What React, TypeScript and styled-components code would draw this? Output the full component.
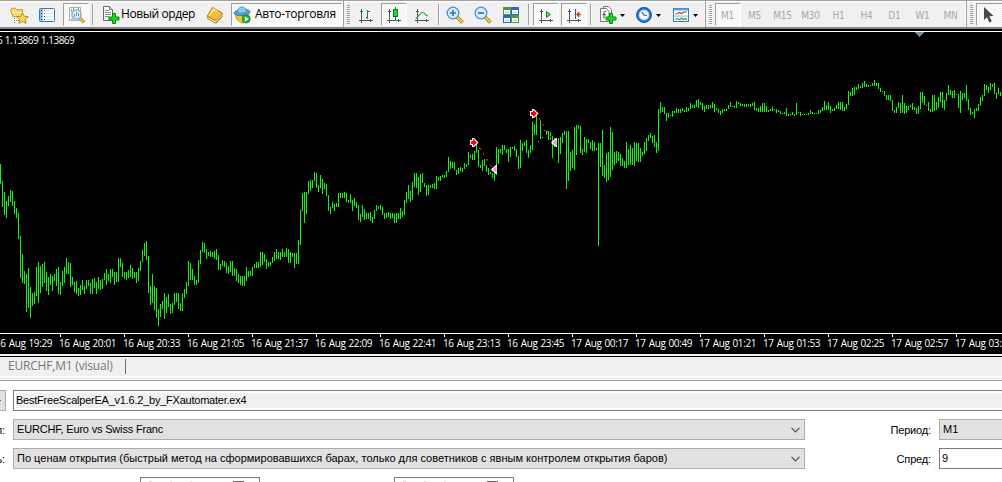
import React from 'react';
import styled, { createGlobalStyle, css } from 'styled-components';

const GlobalStyle = createGlobalStyle`
  * { box-sizing: border-box; }
  body {
    margin: 0;
    overflow: hidden;
    background: #fff;
    font-family: 'Open Sans', 'Noto Sans', sans-serif;
    font-size: 12px;
    color: #000;
  }
`;

/* High/low pixel pairs of the M1 bars, one bar every two pixels. */
const BARS = `
164,184 181,207 192,215 201,218 196,206 190,202 191,206 201,214 208,218 213,239
236,278 254,283 271,284 274,312 268,308 287,318 293,306 292,304 267,296 262,303
266,293 264,287 262,283 272,291 277,295 274,285 276,291 274,281 269,286 267,294
282,295 271,286 267,283 258,274 262,274 263,287 277,285 282,292 281,294 288,296
285,295 280,290 286,294 280,289 280,286 283,294 279,294 278,288 282,294 277,289
280,290 279,289 273,280 269,285 274,281 269,283 269,277 272,285 272,282 258,282
258,267 263,277 272,279 272,280 270,278 265,277 268,279 272,278 272,283 268,281
261,271 250,262 243,256 241,260 256,293 286,305 274,303 286,310 288,318 309,326
304,317 301,309 293,319 297,313 294,307 304,314 303,313 293,305 293,302 293,309
303,311 293,311 289,298 282,294 261,286 263,280 269,280 276,285 280,285 260,283
250,264 242,252 243,253 249,259 252,256 251,257 252,257 251,259 249,260 255,270
264,270 260,266 261,267 263,273 266,274 261,272 261,276 268,276 269,281 274,283
276,285 276,286 276,286 267,281 271,277 271,276 267,276 264,268 262,268 262,268
252,267 252,265 254,262 259,269 262,267 262,266 257,263 252,261 249,259 252,259
252,260 249,257 252,257 248,257 249,263 252,263 253,257 253,268 253,264 240,264
210,245 193,211 192,223 192,214 181,194 180,191 180,188 172,181 173,188 185,192
175,188 179,194 183,189 184,196 195,211 207,214 202,208 204,211 203,207 193,207
193,198 193,198 192,198 193,202 200,203 194,203 200,211 198,206 202,208 205,220
214,222 205,217 209,220 213,219 213,219 212,221 217,223 210,219 205,211 206,209
205,210 207,215 213,219 213,218 212,217 213,219 213,218 214,223 213,223 213,219
208,219 211,217 200,215 192,203 185,199 191,202 182,200 173,187 173,188 177,195
174,192 173,183 183,187 185,196 185,195 185,188 184,188 183,189 176,189 177,181
176,181 175,177 175,178 171,177 157,172 161,169 162,168 162,170 170,175 168,174
167,171 168,172 163,169 164,167 152,165 155,158 154,160 151,160 142,153 150,167
165,168 160,171 159,166 165,172 168,175 172,174 173,178 169,181 147,175 149,164
149,153 145,155 145,150 149,153 149,162 147,157 147,149 146,151 149,157 156,169
140,168 143,151 142,146 140,153 150,158 145,153 122,150 124,135 114,135 141,142
121,139 137,138 130,131 130,135 131,140 132,140 136,158 138,147 138,147 138,163
137,154 133,143 131,135 131,189 131,181 152,171 150,168 127,170 125,155 125,129
126,153 149,155 137,152 139,153 139,143 142,149 140,151 142,151 148,150 143,246
143,167 130,176 165,178 153,182 152,180 127,177 132,170 152,165 151,163 152,161
154,166 158,166 161,168 142,168 149,165 145,165 148,165 142,166 143,161 143,162
148,162 152,156 142,154 138,151 135,141 133,138 136,143 135,147 142,153 109,151
102,113 107,112 107,114 113,121 113,118 115,116 111,117 111,113 108,113 109,113
109,113 108,111 110,112 107,112 108,111 103,109 105,108 105,108 100,107 99,108
102,105 103,110 106,112 105,109 105,109 105,108 102,108 104,112 108,110 109,113
111,115 109,113 109,111 109,111 105,109 102,107 106,107 106,108 101,108 102,104
103,106 104,106 104,107 104,107 104,106 104,107 103,106 102,110 108,111 108,112
106,112 103,112 103,112 106,112 110,112 109,111 107,111 109,110 109,113 110,112
111,114 113,114 112,114 108,116 114,116 114,115 112,115 114,116 103,115 112,113
112,116 114,115 114,115 114,115 113,115 110,114 112,114 113,114 113,114 110,114
110,113 107,111 101,110 105,110 102,110 106,113 109,111 108,111 105,109 102,109
102,110 102,111 107,111 104,109 91,105 92,96 88,96 87,95 87,90 84,89
86,88 83,88 81,87 84,87 85,87 85,86 83,86 80,86 83,86 83,89
88,92 91,92 91,96 95,100 95,100 95,101 100,111 110,113 107,113 102,108
103,113 95,113 103,114 106,113 106,110 105,107 103,110 107,110 108,114 106,114
92,109 92,103 96,105 105,106 102,111 109,112 95,112 95,111 102,110 97,108
92,102 92,108 100,110 93,101 85,95 90,95 91,98 90,98 94,95 94,108
91,113 93,100 93,98 85,101 99,110 108,115 112,114 109,118 108,111 104,111
97,106 95,101 84,96 85,90 87,93 83,90 84,87 83,94 93,99 88,94 92,96
`
  .trim()
  .split(/\s+/)
  .map((pair) => pair.split(',').map(Number));

const BAR_PATH = BARS.map(([hi, lo], i) => `M${i * 2} ${hi}h1V${lo}h-1z`).join('');

const TIMES = [
  '16 Aug 19:29', '16 Aug 20:01', '16 Aug 20:33', '16 Aug 21:05', '16 Aug 21:37', '16 Aug 22:09',
  '16 Aug 22:41', '16 Aug 23:13', '16 Aug 23:45', '17 Aug 00:17', '17 Aug 00:49', '17 Aug 01:21',
  '17 Aug 01:53', '17 Aug 02:25', '17 Aug 02:57', '17 Aug 03:29',
];

const Window = styled.div`
  width: 1002px;
  height: 482px;
  overflow: hidden;
  display: flex;
  flex-direction: column;
`;

/* ---------- toolbar ---------- */

const Toolbar = styled.div`
  flex: none;
  height: 29px;
  background: #f0f0f0;
  border-top: 1px solid #a0a0a0;
  border-bottom: 2px solid #848484;
  display: flex;
  box-shadow: inset 0 1px #fff;
`;

const Band = styled.div<{ $w: number; $pad?: number }>`
  flex: none;
  width: ${(p) => p.$w}px;
  padding: 2px 0 0 ${(p) => p.$pad ?? 0}px;
  display: flex;
  border-right: 1px solid #a0a0a0;
  box-shadow: inset -1px 0 #fbfbfb;
`;

const Tool = styled.div<{ $w: number; $gap?: number; $on?: boolean }>`
  flex: none;
  width: ${(p) => p.$w}px;
  height: 23px;
  margin-left: ${(p) => p.$gap ?? 0}px;
  display: flex;
  align-items: center;
  justify-content: center;
  white-space: nowrap;
  border: 1px solid transparent;
  ${(p) =>
    p.$on &&
    css`
      border-color: #a0a0a0 #fff #fff #a0a0a0;
      background: repeating-conic-gradient(#fff 0 25%, #f0f0f0 0 50%) 0 0 / 2px 2px;
    `}
`;

const Caption = styled.span<{ $ls: number; $gap: number }>`
  margin-left: ${(p) => p.$gap}px;
  margin-right: auto;
  padding-bottom: 2px;
  font-size: 12px;
  line-height: 19px;
  letter-spacing: ${(p) => p.$ls}px;
`;

const Period = styled.span`
  font-family: 'DejaVu Sans Condensed', 'DejaVu Sans', sans-serif;
  font-size: 10px;
  letter-spacing: -0.2px;
  padding: 2px 1px 0 0;
  color: #a8a8a8;
`;

const Divider = styled.div<{ $gap: number }>`
  flex: none;
  width: 2px;
  height: 21px;
  margin: 1px 0 0 ${(p) => p.$gap}px;
  background: linear-gradient(90deg, #a0a0a0 50%, #fafafa 50%);
`;

const Grip = styled.div`
  flex: none;
  width: 3px;
  height: 20px;
  margin-top: 2px;
  background: repeating-linear-gradient(#a0a0a0 0 1px, #f4f4f4 1px 2px);
`;

const Drop = styled.div<{ $gap: number }>`
  flex: none;
  width: 5px;
  height: 3px;
  margin: 11px 0 0 ${(p) => p.$gap}px;
  background: #000;
  clip-path: polygon(0 0, 100% 0, 50% 100%);
`;

const Glyph = styled.svg`
  flex: none;
  display: block;
  width: 20px;
  height: 20px;
`;

const Icon = ({ children }: { children: React.ReactNode }) => <Glyph viewBox="0 0 20 20">{children}</Glyph>;

const Axes = () => (
  <g stroke="#555" fill="none" shapeRendering="crispEdges">
    <path d="M5.5 4v14M3 15.5h14M4 6.5h3M14.5 14v3" />
  </g>
);

const StarIcon = () => (
  <Icon>
    <path d="M1.500 5.200l1.200-2h3.500l1.300 1.500h6v7H4z" fill="#f6d978" stroke="#c8972b" />
    <path d="M3 7.500h11" stroke="#fff0b8" />
    <path d="M5.500 13v5.500M7 15.500h3" stroke="#777" strokeDasharray="1 1" />
    <path d="M13.500 7.500l1.800 3.700 4 .5-3 2.700.8 4-3.600-2-3.600 2 .8-4-3-2.700 4-.5z" fill="#fbd44c" stroke="#b58420" strokeWidth=".9" />
  </Icon>
);

const NavigatorIcon = () => (
  <Icon>
    <rect x="2.500" y="3.500" width="15" height="13" rx="1" fill="#fff" stroke="#3674b5" />
    <path d="M4.500 4v12" stroke="#8fc0ec" strokeWidth="3" />
    <path d="M4.500 5v11" stroke="#1c4f86" strokeDasharray="1 2" />
    <path d="M7.500 5v1M7.500 8v1" stroke="#e03030" />
    <path d="M7.500 11v1M7.500 14v1" stroke="#333" />
    <path d="M9 5.500h7M9 8.500h7M9 11.500h7M9 14.500h7" stroke="#d8e6f5" />
  </Icon>
);

const TesterIcon = () => (
  <Icon>
    <path d="M3.500 2.500h11v13h-11z" fill="#fafafa" stroke="#b5b09c" />
    <path d="M5.500 4v3M7.500 2v4M12.500 2v4M5 14h3" stroke="#8d98a5" />
    <path d="M14 13l4 4.500" stroke="#b48a20" strokeWidth="3.200" />
    <path d="M14 13l3.800 4.200" stroke="#f2cc55" strokeWidth="1.500" />
    <circle cx="10.500" cy="9.500" r="4.600" fill="#d9ecfc" stroke="#7ba7d2" strokeWidth="1.300" />
    <path d="M8.500 9v3M10.500 7v4M12.500 8v3" stroke="#6b99c6" />
  </Icon>
);

const Plus = () => (
  <path d="M11.500 8.500h3v3.500h3.500v3h-3.500v3.500h-3V15H8v-3h3.500z" fill="#22d32a" stroke="#078a12" strokeWidth="1" />
);

const NewOrderIcon = () => (
  <Icon>
    <path d="M2.500 1.500h6l3 3v11h-9z" fill="#fafafa" stroke="#666" />
    <path d="M8.500 1.500v3h3" fill="#ddd" stroke="#777" />
    <path d="M4 5.500h4M4 7.500h6M4 9.500h6M4 11.500h4" stroke="#8b8b8b" />
    <Plus />
  </Icon>
);

const BookIcon = () => (
  <Icon>
    <path d="M2 11.500v2.300l9 5 6.800-7.300V8.500z" fill="#a86c10" />
    <path d="M2.500 12.500l8 4.200 7-7.200" stroke="#fff3c4" strokeWidth="1.400" fill="none" />
    <path d="M2 11.300L7.500 2.500 17.800 8.300 11 15.500z" fill="#f0be3c" stroke="#b0760f" strokeWidth=".9" />
    <path d="M4.500 10.700L8.300 4.300l3.700 2" stroke="#fdeaa0" strokeWidth="1.500" fill="none" />
  </Icon>
);

const AutoIcon = () => (
  <Icon>
    <path d="M3 8.500l7 2.500 7-3.500-1 7-6 4-5.500-4z" fill="#f0c53e" stroke="#c6942a" strokeWidth=".8" />
    <ellipse cx="10" cy="7.500" rx="8" ry="3" transform="rotate(-6 10 7.500)" fill="#54a3cf" stroke="#2f7ba8" strokeWidth=".8" />
    <path d="M5.500 7c0-6 8-7 9-1-2 2.500-6.500 3-9 1z" fill="#8dcbe9" stroke="#3d88b3" strokeWidth=".8" />
    <circle cx="14.200" cy="14" r="4" fill="#21b432" stroke="#0b8a1b" strokeWidth=".8" />
    <path d="M12.800 11.500v5l4-2.500z" fill="#fff" />
  </Icon>
);

const BarsIcon = () => (
  <Icon>
    <Axes />
    <path d="M9.500 12.500h2M11.500 5v9M11.500 6.500h2" stroke="#168a24" fill="none" shapeRendering="crispEdges" />
  </Icon>
);

const CandleIcon = () => (
  <Icon>
    <Axes />
    <path d="M11.500 2v13" stroke="#087d17" shapeRendering="crispEdges" />
    <path d="M9.500 4.500h4v7h-4z" fill="#1edb34" stroke="#087d17" shapeRendering="crispEdges" />
  </Icon>
);

const LineIcon = () => (
  <Icon>
    <Axes />
    <path d="M4 13.500C7 11 8 7.500 10.500 7.500S13 10.500 16 11" stroke="#2fa63a" strokeWidth="1.200" fill="none" />
  </Icon>
);

const ZoomIcon = ({ plus }: { plus?: boolean }) => (
  <Icon>
    <path d="M12 12l5.500 5.500" stroke="#a9801a" strokeWidth="3.600" />
    <path d="M12 12l5.200 5.200" stroke="#f3d050" strokeWidth="1.800" />
    <circle cx="8" cy="8" r="5.800" fill="#d3ebfc" stroke="#4a90cb" strokeWidth="1.300" />
    <path d={plus ? 'M5 8h6M8 5v6' : 'M5 8h6'} stroke="#3178b5" strokeWidth="1.700" />
  </Icon>
);

const TilesIcon = () => (
  <Icon>
    <path d="M2 2h8v8H2zM10 10h8v8h-8z" fill="#4ba32a" />
    <path d="M10 2h8v8h-8zM2 10h8v8H2z" fill="#2c63d6" />
    <path d="M3 5h6v4H3zM11 5h6v4h-6zM3 13h6v4H3zM11 13h6v4h-6z" fill="#fff" />
    <path d="M4 7.500h4M12 7.500h4M4 15.500h4M12 15.500h4" stroke="#b9c9b5" />
  </Icon>
);

const ScrollIcon = () => (
  <Icon>
    <Axes />
    <path d="M10.500 6.500v6l4-3z" fill="#4be05a" stroke="#12912a" />
  </Icon>
);

const ShiftIcon = () => (
  <Icon>
    <Axes />
    <path d="M11.500 4v10" stroke="#28609a" shapeRendering="crispEdges" />
    <path d="M17 9.500h-4M15.300 7.200L13 9.500l2.300 2.300" stroke="#c2410c" strokeWidth="1.300" fill="none" />
  </Icon>
);

const IndicatorIcon = () => (
  <Icon>
    <path d="M5.500 1.500h5l3 3v9h-8z" fill="#fff" stroke="#777" />
    <path d="M2.500 3.500h6l2.500 3v10H2.500z" fill="#fafafa" stroke="#777" />
    <path d="M8 6.500c-2-1-2 1-2 2v5M4.500 9.500h3" stroke="#444" fill="none" />
    <Plus />
  </Icon>
);

const ClockIcon = () => (
  <Icon>
    <circle cx="10" cy="10" r="7.300" fill="#2b83dc" stroke="#0f4fa3" strokeWidth="1.200" />
    <circle cx="10" cy="10" r="5" fill="#f1f8ff" stroke="#9ac6f0" strokeWidth=".6" />
    <path d="M8 7l2 3.200h3" stroke="#555" strokeWidth="1.100" fill="none" />
  </Icon>
);

const TemplateIcon = () => (
  <Icon>
    <rect x="2.500" y="3.500" width="15" height="13" fill="#fff" stroke="#3c7fc5" />
    <path d="M3 4.500h14" stroke="#5aa2e6" strokeWidth="2" />
    <path d="M3 11h14" stroke="#84b4e3" />
    <path d="M4.500 9l2-.5 2-1 2 1 2.500-1.500H16" stroke="#a34536" fill="none" strokeWidth="1.200" />
    <path d="M4.500 14.500l2-1 2 1 2-1.500 2 1.500 2-1 1.500 1.500" stroke="#3d9b4c" fill="none" strokeWidth="1.100" />
  </Icon>
);

const CursorIcon = () => (
  <Icon>
    <path d="M3 2v13l2.900-2.800 2.500 5.200 2.400-1.100-2.500-5.100 4.200-.3z" fill="#484848" />
  </Icon>
);

/* ---------- chart ---------- */

const ChartPane = styled.div`
  flex: none;
  height: 325px;
  background: #000;
  position: relative;
  display: flex;
  flex-direction: column;
`;

const Plot = styled.svg`
  display: block;
  flex: none;
`;

const Quote = styled.div`
  position: absolute;
  left: -3px;
  top: 4px;
  font-size: 10px;
  line-height: 14px;
  letter-spacing: -0.5px;
  word-spacing: 0.5px;
  white-space: pre;
  color: #fff;
`;

const TimeAxis = styled.div`
  display: flex;
  height: 21px;
  margin-left: -4px;
`;

const TimeLabel = styled.div`
  flex: none;
  width: 64px;
  font-size: 10px;
  line-height: 14px;
  padding-top: 2px;
  letter-spacing: -0.42px;
  word-spacing: 1px;
  white-space: nowrap;
  color: #fff;
  background: linear-gradient(#fff, #fff) 0 0 / 1px 3px no-repeat;

  span {
    margin-left: -1px;
  }
`;

const Sell = ({ x, y }: { x: number; y: number }) => (
  <g transform={`translate(${x} ${y})`} shapeRendering="geometricPrecision">
    <path d="M0 2h2V0h2l4.500 4.500L4 9H2V7H0z" fill="#fff" />
    <path d="M1 3h2V1.300h.7l3.300 3.200-3.300 3.200H3V6H1z" fill="#f00" />
  </g>
);

const Exit = ({ x, y }: { x: number; y: number }) => (
  <g transform={`translate(${x} ${y})`} shapeRendering="geometricPrecision">
    <path d="M6 0v9H5L.3 5V4L5 0z" fill="#fff" />
    <path d="M5.500 1v7L1.800 4.500z" fill="#ee82ee" />
  </g>
);

/* ---------- tabs and tester ---------- */

const TabStrip = styled.div`
  flex: none;
  height: 27px;
  background: #f0f0f0;
  border-bottom: 1px solid #a0a0a0;
  box-shadow: inset 0 2px #f0f0f0, inset 0 3px #000, inset 0 -3px #f0f0f0, inset 0 -4px #fff;
  padding-top: 4px;
  display: flex;
`;

const Tab = styled.div`
  width: 126px;
  height: 15px;
  margin-top: 1px;
  padding-left: 8px;
  border-right: 1px solid #6d6d6d;
  line-height: 14px;
  font-size: 12px;
  letter-spacing: -0.2px;
  color: #767676;
  white-space: nowrap;
`;

const Tester = styled.div`
  flex: 1;
  background: #fff;
  padding-top: 9px;
  display: flex;
  flex-direction: column;
  font-family: 'Liberation Sans', Arial, sans-serif;
`;

const Row = styled.div<{ $mb: number }>`
  flex: none;
  height: 21px;
  margin-bottom: ${(p) => p.$mb}px;
  display: flex;
`;

const Label = styled.div<{ $w: number }>`
  flex: none;
  width: ${(p) => p.$w}px;
  padding-right: 8px;
  display: flex;
  justify-content: flex-end;
  line-height: 22px;
  font-size: 11px;
  letter-spacing: -0.15px;
  white-space: nowrap;
`;

const Field = styled.div<{ $w?: number; $ls: number; $plain?: boolean }>`
  flex: none;
  width: ${(p) => p.$w ?? 100}px;
  height: 21px;
  padding: 0 4px 0 ${(p) => (p.$plain ? 2 : 3)}px;
  border: 1px solid ${(p) => (p.$plain ? '#7a7a7a' : '#adadad')};
  background: ${(p) => (p.$plain ? '#fff' : '#e1e1e1')};
  display: flex;
  justify-content: space-between;
  align-items: center;
  font-size: 11px;
  line-height: 19px;
  letter-spacing: ${(p) => p.$ls}px;
  white-space: nowrap;
`;

const ReadOnly = styled.div`
  flex: 1;
  height: 15px;
  line-height: 14px;
  background: #f0f0f0;
`;

const PickerEdge = styled.div`
  flex: none;
  width: 6px;
  height: 21px;
  margin-right: 7px;
  border: 1px solid #adadad;
  border-left: 0;
  background: linear-gradient(#666, #666) 0 9px / 1px 1px no-repeat #e1e1e1;
`;

const Chevron = () => (
  <svg width="9" height="6" viewBox="0 0 9 6">
    <path d="M.5 .8l4 4 4-4" fill="none" stroke="#505050" strokeWidth="1.200" />
  </svg>
);

const DateBox = styled.div<{ $gap: number }>`
  width: 120px;
  height: 21px;
  margin-left: ${(p) => p.$gap}px;
  border: 1px solid #7a7a7a;
  padding: 3px 0 0 8px;
  display: flex;
  gap: 18px;
`;

const DateMark = styled.div<{ $w: number; $c: string; $push?: boolean }>`
  width: ${(p) => p.$w}px;
  height: 8px;
  background: ${(p) => p.$c};
  margin-left: ${(p) => (p.$push ? 23 : 0)}px;
`;

const PERIODS = ['M5', 'M15', 'M30', 'H1', 'H4', 'D1', 'W1', 'MN'];

export default function App() {
  return (
    <Window>
      <GlobalStyle />
      <Toolbar>
        <Band $w={344} $pad={5}>
          <Tool $w={28}><StarIcon /></Tool>
          <Tool $w={28}><NavigatorIcon /></Tool>
          <Tool $w={26} $gap={2} $on><TesterIcon /></Tool>
          <Divider $gap={3} />
          <Tool $w={103} $gap={6}><NewOrderIcon /><Caption $gap={0} $ls={-0.4}>Новый ордер</Caption></Tool>
          <Tool $w={24}><BookIcon /></Tool>
          <Tool $w={111} $gap={4} $on><AutoIcon /><Caption $gap={3} $ls={-0.26}>Авто-торговля</Caption></Tool>
        </Band>
        <Band $w={362} $pad={3}>
          <Grip />
          <Tool $w={26} $gap={3}><BarsIcon /></Tool>
          <Tool $w={26} $gap={2} $on><CandleIcon /></Tool>
          <Tool $w={26} $gap={2}><LineIcon /></Tool>
          <Divider $gap={3} />
          <Tool $w={26} $gap={2}><ZoomIcon plus /></Tool>
          <Tool $w={26} $gap={2}><ZoomIcon /></Tool>
          <Tool $w={26} $gap={2}><TilesIcon /></Tool>
          <Divider $gap={4} />
          <Tool $w={26} $gap={3} $on><ScrollIcon /></Tool>
          <Tool $w={26} $gap={2} $on><ShiftIcon /></Tool>
          <Divider $gap={3} />
          <Tool $w={26} $gap={3}><IndicatorIcon /></Tool>
          <Drop $gap={-1} />
          <Tool $w={26} $gap={6}><ClockIcon /></Tool>
          <Drop $gap={-1} />
          <Tool $w={26} $gap={7}><TemplateIcon /></Tool>
          <Drop $gap={-1} />
        </Band>
        <Band $w={261} $pad={3}>
          <Grip />
          <Tool $w={26} $gap={3} $on><Period>M1</Period></Tool>
          {PERIODS.map((name) => (
            <Tool key={name} $w={28}><Period>{name}</Period></Tool>
          ))}
        </Band>
        <Band $w={60} $pad={3}>
          <Grip />
          <Tool $w={30} $gap={3} $on><CursorIcon /></Tool>
        </Band>
      </Toolbar>

      <ChartPane>
        <Plot width="1002" height="305" viewBox="0 29 1002 305" shapeRendering="crispEdges">
          <path d="M0 31h1002v1H0zM0 333h1002v1H0z" fill="#fff" />
          <path d="M914 32h11l-5.500 5z" fill="#778899" />
          <path d={BAR_PATH} fill="#0f0" />
          <path d="M479 147L493 169M539 118L554 143" stroke="#f00" strokeDasharray="3 4" fill="none" />
          <Sell x={470} y={138} />
          <Sell x={530} y={109} />
          <Exit x={491} y={165} />
          <Exit x={551} y={138} />
        </Plot>
        <Quote>6 1.13869 1.13869</Quote>
        <TimeAxis>
          {TIMES.map((t) => (
            <TimeLabel key={t}><span>{t}</span></TimeLabel>
          ))}
        </TimeAxis>
      </ChartPane>

      <TabStrip>
        <Tab>EURCHF,M1 (visual)</Tab>
      </TabStrip>

      <Tester>
        <Row $mb={8}>
          <PickerEdge />
          <Field $w={1000} $ls={-0.23} $plain>
            <ReadOnly>BestFreeScalperEA_v1.6.2_by_FXautomater.ex4</ReadOnly>
          </Field>
        </Row>
        <Row $mb={8}>
          <Label $w={13}>л:</Label>
          <Field $w={792} $ls={-0.18}>EURCHF, Euro vs Swiss Franc<Chevron /></Field>
          <Label $w={134}>Период:</Label>
          <Field $ls={0}>M1</Field>
        </Row>
        <Row $mb={8}>
          <Label $w={13}>ь:</Label>
          <Field $w={792} $ls={0.01}>
            По ценам открытия (быстрый метод на сформировавшихся барах, только для советников с явным контролем открытия баров)
            <Chevron />
          </Field>
          <Label $w={134}>Спред:</Label>
          <Field $ls={0} $plain>9</Field>
        </Row>
        <Row $mb={0}>
          {[140, 134].map((gap) => (
            <DateBox key={gap} $gap={gap}>
              <DateMark $w={3} $c="#eccfe0" />
              <DateMark $w={2} $c="#ddd0ee" />
              <DateMark $w={2} $c="#eccfe0" />
              <DateMark $w={11} $c="#7a6a6c" $push />
            </DateBox>
          ))}
        </Row>
      </Tester>
    </Window>
  );
}
